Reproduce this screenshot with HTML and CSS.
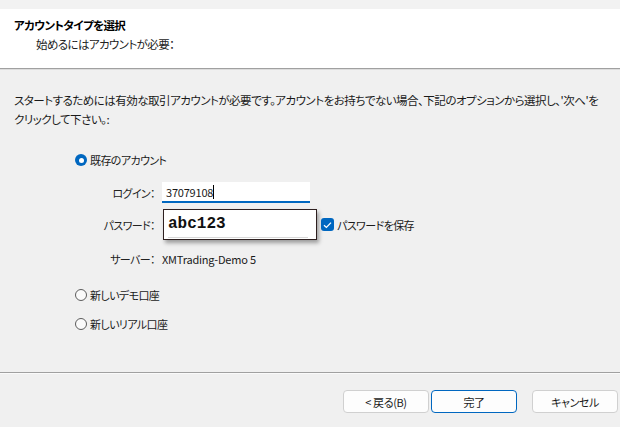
FILE: index.html
```html
<!DOCTYPE html>
<html>
<head>
    <meta charset="utf-8" />
    <title>アカウントタイプを選択</title>
    <link rel="stylesheet" href="styles.css">
</head>
<body>
    <div class="topbar"></div>
    <section class="header">
        <div class="title">アカウントタイプを選択</div>
        <div class="subtitle">始めるにはアカウントが必要：</div>
    </section>

    <section class="content">
        <p class="intro">スタートするためには有効な取引アカウントが必要です。アカウントをお持ちでない場合、下記のオプションから選択し、'次へ'を<br>クリックして下さい。:</p>

        <div class="choice first">
            <span class="radio checked"></span>既存のアカウント
        </div>

        <div class="form">
            <div class="row login">
                <span class="label">ログイン：</span>
                <div class="field">37079108<span class="caret"></span></div>
            </div>
            <div class="row password">
                <span class="label">パスワード：</span>
                <div class="passbox"><span class="passtext">abc123</span></div>
                <span class="check">
                    <svg width="9" height="8" viewBox="0 0 9 8"><path d="M1 4.2 L3.4 6.4 L8 1.6" fill="none" stroke="#fff" stroke-width="1.3"/></svg>
                </span>
                <span class="checklabel">パスワードを保存</span>
            </div>
            <div class="row server">
                <span class="label">サーバー：</span>
                <span class="value">XMTrading-Demo 5</span>
            </div>
        </div>

        <div class="choice second">
            <span class="radio"></span>新しいデモ口座
        </div>
        <div class="choice third">
            <span class="radio"></span>新しいリアル口座
        </div>
    </section>

    <section class="footer">
        <button class="btn">&lt;&nbsp;戻る(B)</button>
        <button class="btn primary">完了</button>
        <button class="btn cancel">キャンセル</button>
    </section>
</body>
</html>
```

FILE: styles.css
```css
*{
    padding:0;
    margin:0;
    box-sizing:border-box;
}
body{
    width:620px;
    height:427px;
    overflow:hidden;
    background-color:#f0f0f0;
    color:#1a1a1a;
    font:11px "Noto Sans CJK JP", "Noto Sans", sans-serif;
    font-feature-settings:"palt";
    letter-spacing:-0.6px;
}
.topbar{
    height:9px;
    background-color:#f2f2f2;
}
.header{
    height:60px;
    background-color:#fff;
    border-bottom:1px solid #a0a0a0;
    box-shadow:0 1px 0 #dcdcdc;
    padding:8px 0 0 14px;
}
.title{
    font-weight:bold;
    font-size:11.5px;
    line-height:17px;
    color:#000;
}
.subtitle{
    font-size:11.5px;
    line-height:17px;
    margin-top:2px;
    padding-left:22px;
    color:#222;
}

.content{
    height:304px;
    border-bottom:1px solid #a0a0a0;
    box-shadow:0 1px 0 #fafafa;
}
.intro{
    padding:22px 0 0 14px;
    font-size:11.5px;
    line-height:19px;
    letter-spacing:-0.5px;
    white-space:nowrap;
}

.choice{
    display:flex;
    align-items:center;
    height:20px;
    padding-left:75px;
}
.choice.first{ margin-top:21px; }
.choice.second{ margin-top:16px; }
.choice.third{ margin-top:9px; }

.radio{
    width:12px;
    height:12px;
    border:1px solid #5c5c5c;
    border-radius:50%;
    background-color:#fafafa;
    margin-right:3px;
    display:flex;
    justify-content:center;
    align-items:center;
}
.radio.checked{
    border:none;
    background-color:#0067c0;
}
.radio.checked::after{
    content:"";
    width:5px;
    height:5px;
    border-radius:50%;
    background-color:#fff;
}

.form{
    padding-left:75px;
}
.row{
    display:flex;
    align-items:center;
}
.label{
    width:80px;
    text-align:right;
    color:#222;
}
.row.login{
    margin-top:12px;
    height:21px;
}
.field{
    margin-left:7px;
    width:148px;
    height:21px;
    background-color:#fff;
    border-bottom:2px solid #0067c0;
    padding-left:4px;
    line-height:20px;
    letter-spacing:-0.2px;
    display:flex;
    align-items:center;
}
.caret{
    width:1px;
    height:14px;
    background-color:#000;
}
.row.password{
    margin-top:6px;
    height:31px;
}
.passbox{
    margin-left:8px;
    width:154px;
    height:31px;
    background-color:#fff;
    border:1px solid #2e2020;
    box-shadow:2px 3px 4px rgba(0,0,0,0.35);
    padding:0 0 0 4px;
    display:flex;
    align-items:center;
}
.passtext{
    display:block;
    width:140px;
    height:27px;
    border-bottom:1px solid #d8d8d8;
    font:bold 16px "Liberation Mono", monospace;
    letter-spacing:0;
    line-height:27px;
    color:#111;
}
.check{
    width:13px;
    height:13px;
    margin-left:4px;
    border-radius:3px;
    background-color:#0067c0;
    display:flex;
    justify-content:center;
    align-items:center;
}
.checklabel{
    margin-left:3px;
}
.row.server{
    margin-top:9px;
    height:20px;
}
.value{
    margin-left:7px;
    letter-spacing:-0.2px;
}

.footer{
    display:flex;
    padding:17px 0 0 343px;
}
.btn{
    width:86px;
    height:23px;
    border:1px solid #d0d0d0;
    border-radius:4px;
    background-color:#fdfdfd;
    font:11px "Noto Sans CJK JP", "Noto Sans", sans-serif;
    font-feature-settings:"palt";
    letter-spacing:-0.4px;
    color:#1a1a1a;
}
.btn.primary{
    margin-left:2px;
    border-color:#0067c0;
}
.btn.cancel{
    margin-left:15px;
}
```
